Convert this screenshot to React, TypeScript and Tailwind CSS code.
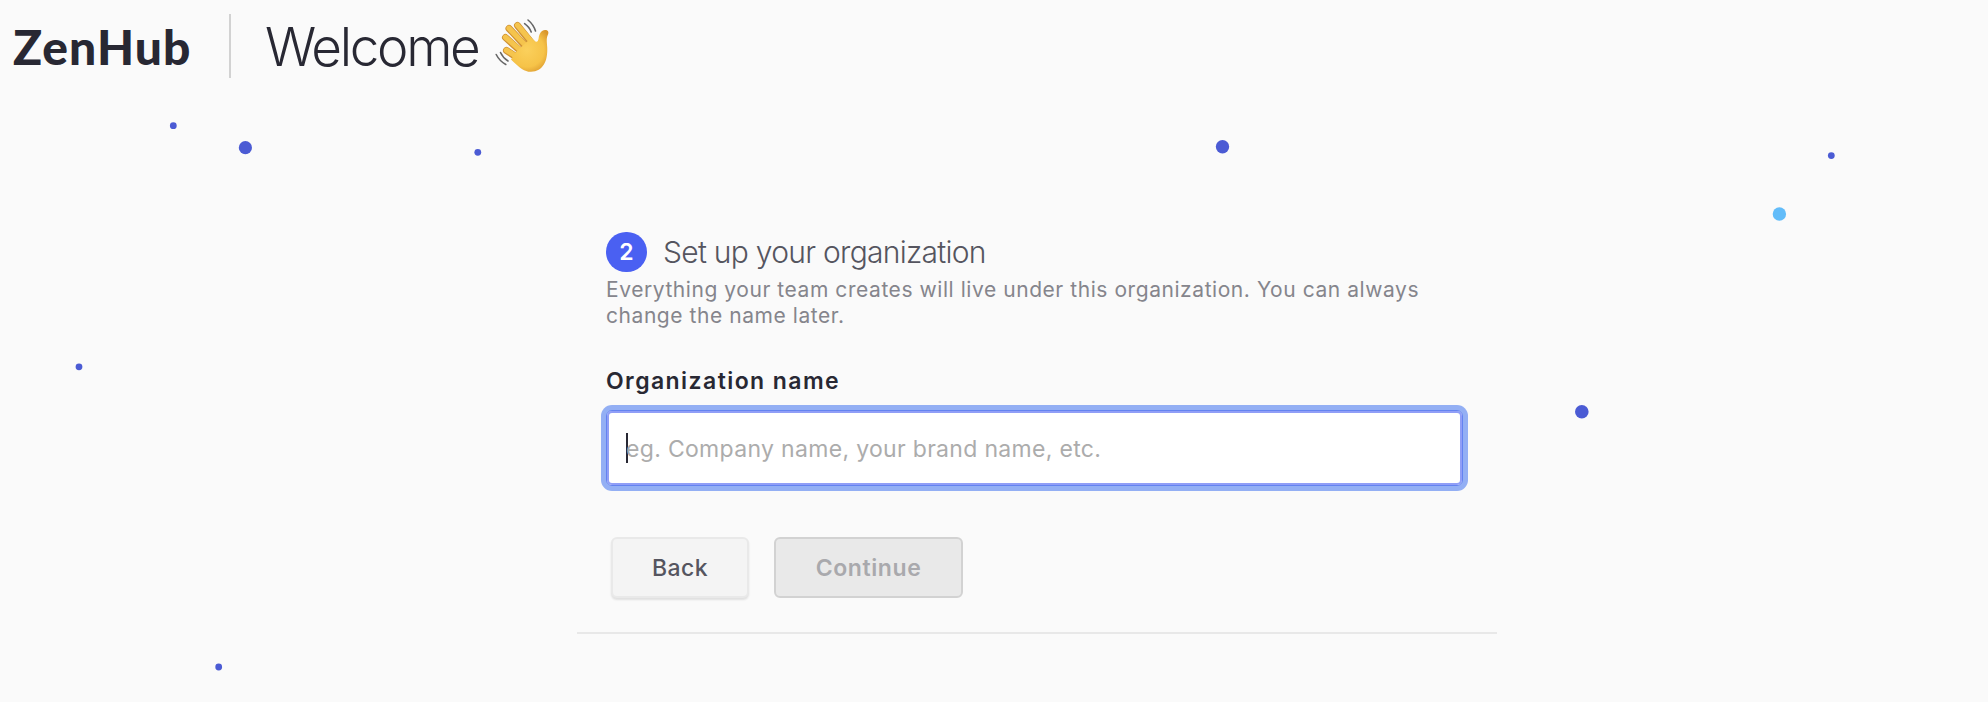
import React from "react";

type Dot = { x: number; y: number; r: number; fill: string };

const INDIGO = "#4b5bd4";

const dots: Dot[] = [
  { x: 173.3, y: 125.7, r: 3.4, fill: INDIGO },
  { x: 245.4, y: 147.7, r: 6.6, fill: INDIGO },
  { x: 477.8, y: 152.3, r: 3.4, fill: INDIGO },
  { x: 1222.5, y: 146.8, r: 6.7, fill: INDIGO },
  { x: 1831.3, y: 155.6, r: 3.4, fill: INDIGO },
  { x: 1779.4, y: 214, r: 6.7, fill: "#62bcf9" },
  { x: 79, y: 366.8, r: 3.4, fill: INDIGO },
  { x: 1581.8, y: 411.8, r: 6.8, fill: INDIGO },
  { x: 218.7, y: 667, r: 3.4, fill: INDIGO },
];

function Dots() {
  return (
    <svg className="pointer-events-none absolute inset-0" width="1988" height="702" aria-hidden="true">
      {dots.map((d) => (
        <circle key={`${d.x}-${d.y}`} cx={d.x} cy={d.y} r={d.r} fill={d.fill} />
      ))}
    </svg>
  );
}

function WavingHand() {
  return (
    <svg className="ml-[15px] mt-[18px]" width="56" height="56" viewBox="494 18 56 56" aria-label="Waving hand">
      <defs>
        <radialGradient id="palm" gradientUnits="userSpaceOnUse" cx="527" cy="50" r="26">
          <stop offset="0" stopColor="#fbd05c" />
          <stop offset="0.65" stopColor="#f6c348" />
          <stop offset="1" stopColor="#d9962c" />
        </radialGradient>
      </defs>
      <g fill="none" strokeLinecap="round">
        <g stroke="#cf9133" strokeWidth="7">
          <path d="M506.5 50.5 L524 62" />
          <path d="M505.5 37.5 L526 56" />
          <path d="M509 28.5 L530 51" />
          <path d="M517.5 25.5 L534 46" />
        </g>
        <g stroke="#f5c44d" strokeWidth="5.2">
          <path d="M506.5 50.2 L525 62" />
          <path d="M505.5 37.2 L527 56" />
          <path d="M509 28.2 L531 51" />
          <path d="M517.5 25.2 L535 46" />
        </g>
      </g>
      <path
        d="M516 52 L531 38 L535.5 41.5 C537 42.5 538.2 41 538.6 38.5 C539.2 34 541.3 30 545 30 C548 30 549 32 548 34.5 C546 38.5 547 42 547.2 47 C548 61 543 71.5 531 71.8 C525 72 520 68.5 511 59.5 Z"
        fill="url(#palm)"
      />
      <g fill="none" stroke="#666" strokeWidth="1.6" strokeLinecap="round">
        <path d="M524.6 23.6 Q529.5 27 531.2 32" />
        <path d="M528 20 Q533.5 24.5 535.5 31" />
        <path d="M500.5 52.5 Q503 58 508 61" />
        <path d="M496.2 54.5 Q499.5 61 505.8 64.5" />
      </g>
    </svg>
  );
}

export default function App() {
  return (
    <div className="relative h-[702px] w-[1988px] overflow-hidden bg-[#fafafa] font-['Inter','Liberation_Sans',sans-serif] text-[#282833]">
      <Dots />
      <header className="flex h-[92px] items-start pl-[13px]">
        <div className="mt-[17px] w-[216px] font-['Lato',sans-serif] text-[48px] leading-[60px] font-black tracking-[1.1px]">
          ZenHub
        </div>
        <div className="mt-[14px] h-16 w-0.5 bg-[#d2d2d2]" />
        <h1 className="mt-[17px] ml-[34px] text-[53px] leading-[60px] font-light tracking-[-2.3px]">Welcome</h1>
        <WavingHand />
      </header>

      <main className="ml-[577px] flex h-[542px] w-[920px] flex-col border-b-2 border-[#e8e8e8] pl-[29px]">
        <div className="mt-[140px] flex h-10 items-center">
          <span className="flex h-10 w-[41px] items-center justify-center rounded-full bg-[#4a60f2] text-[23px] font-semibold text-white">
            2
          </span>
          <h2 className="ml-4 text-[30px] leading-[40px] font-light tracking-[-0.72px] text-[#55555f]">
            Set up your organization
          </h2>
        </div>
        <p className="mt-[5px] w-[830px] text-[21px] leading-[26px] tracking-[0.56px] text-[#85858c]">
          Everything your team creates will live under this organization. You can always
          <br />
          change the name later.
        </p>
        <label className="mt-[37px] text-[23px] leading-[30px] font-semibold tracking-[1.43px]">Organization name</label>
        <div className="mt-[14px] flex h-[76px] w-[857px] items-center rounded-[6px] border border-[#6483f0] bg-white pt-0.5 pl-[19px] shadow-[inset_0_0_0_2px_#909ef7,0_0_0_5px_#93aff4]">
          <span className="mb-0.5 h-[30px] w-0.5 bg-[#282833]" />
          <span className="-ml-0.5 text-[23px] tracking-[0.32px] text-[#acacac]">
            eg. Company name, your brand name, etc.
          </span>
        </div>
        <div className="mt-[51px] ml-[5px] flex items-start gap-[25px]">
          <button className="h-[61px] w-[138px] rounded-md border-2 border-[#e9e9e9] bg-[#f4f4f4] pt-0.5 text-[23px] font-medium tracking-[0.4px] text-[#55555f] shadow-[0_2px_2px_#e0e0e0]">
            Back
          </button>
          <button className="h-[61px] w-[189px] rounded-md border-2 border-[#d2d2d2] bg-[#e9e9e9] pt-0.5 text-[23px] font-semibold tracking-[0.6px] text-[#a9a9ad]">
            Continue
          </button>
        </div>
      </main>
    </div>
  );
}
